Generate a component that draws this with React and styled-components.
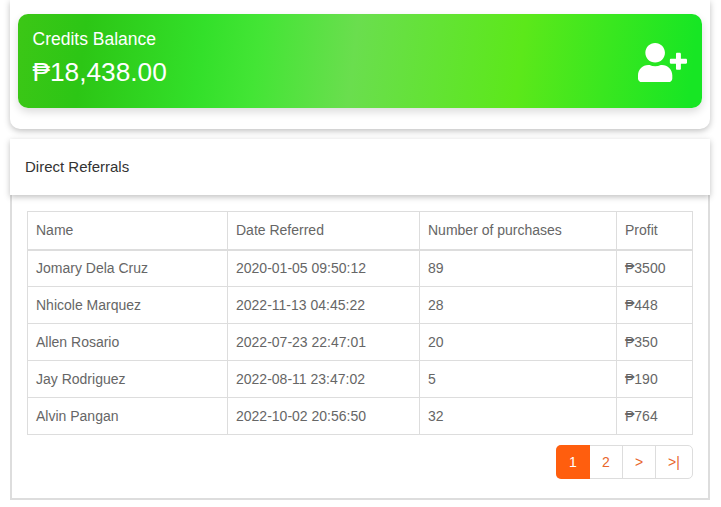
import React from 'react'
import styled, { createGlobalStyle } from 'styled-components'
import { FaUserPlus } from 'react-icons/fa'

const GlobalStyle = createGlobalStyle`
  html, body { margin: 0; padding: 0; background: #fff; }
  body { font-family: "Liberation Sans", Arial, sans-serif; }
  * { box-sizing: border-box; }
`

const Page = styled.div`
  width: 721px;
  height: 507px;
  padding: 0 11px 0 10px;
  overflow: hidden;
`

const BalanceCard = styled.section`
  height: 129px;
  padding: 14px 8px 0;
  background: #fff;
  border-radius: 0 0 10px 10px;
  box-shadow: 0 2px 6px rgba(0, 0, 0, 0.25);
`

const Banner = styled.div`
  height: 94px;
  padding: 0 15px 0 14.5px;
  display: flex;
  align-items: center;
  justify-content: space-between;
  color: #fff;
  border-radius: 10px;
  background: linear-gradient(97deg, #3cc716 0%, #2cc615 10%, #33e02a 27%, #43e535 35%, #6ade4e 49%, #5ce81a 73%, #17e624 98%);
  box-shadow: 0 4px 8px rgba(0, 0, 0, 0.14);
`

const BannerText = styled.div`
  display: flex;
  flex-direction: column;
  gap: 6px;
  margin-bottom: 6px;
`

const BannerLabel = styled.div`
  font-size: 17.5px;
  line-height: 21px;
`

const BannerAmount = styled.div`
  font-size: 26.25px;
  line-height: 32px;
`

const UserIcon = styled(FaUserPlus)`
  margin-top: 2px;
`

const HeaderBar = styled.div`
  height: 56px;
  margin-top: 10px;
  padding: 0 15px 2px;
  display: flex;
  align-items: center;
  position: relative;
  font-size: 15px;
  color: #333;
  background: #fff;
  box-shadow: 0 2px 6px rgba(0, 0, 0, 0.25);
`

const Body = styled.div`
  height: 305px;
  padding: 16px 15px 0;
  background: #fff;
  border: 2px solid #ddd;
  border-top: 0;
  display: flex;
  flex-direction: column;
  align-items: flex-end;
`

const Table = styled.table`
  width: 665px;
  border-collapse: collapse;
  table-layout: fixed;
  font-size: 14px;
  color: #666;
`

const Th = styled.th`
  height: 38px;
  padding: 0 8px;
  font-weight: 400;
  text-align: left;
  border: 1px solid #ddd;
  border-bottom-width: 2px;
  width: ${p => p.$w}px;
`

const Td = styled.td`
  height: 37px;
  padding: 0 8px;
  border: 1px solid #ddd;
`

const Pager = styled.div`
  margin-top: 10px;
  display: flex;
  height: 34px;
  border: 1px solid #ddd;
  border-radius: 5px;
`

const PageBtn = styled.div`
  width: ${p => p.$w}px;
  display: flex;
  align-items: center;
  justify-content: center;
  font-size: 14px;
  color: ${p => (p.$active ? '#fff' : '#e8662c')};
  background: ${p => (p.$active ? '#ff5e0e' : 'transparent')};
  border-left: ${p => (p.$first || p.$plain ? '0' : '1px solid #ddd')};
  margin: ${p => (p.$active ? '-1px 0 -1px -1px' : '0')};
  border-radius: ${p => (p.$active ? '5px 0 0 5px' : '0')};
`

const rows = [
  ['Jomary Dela Cruz', '2020-01-05 09:50:12', '89', '₱3500'],
  ['Nhicole Marquez', '2022-11-13 04:45:22', '28', '₱448'],
  ['Allen Rosario', '2022-07-23 22:47:01', '20', '₱350'],
  ['Jay Rodriguez', '2022-08-11 23:47:02', '5', '₱190'],
  ['Alvin Pangan', '2022-10-02 20:56:50', '32', '₱764'],
]

export default function App() {
  return (
    <Page>
      <GlobalStyle />
      <BalanceCard>
        <Banner>
          <BannerText>
            <BannerLabel>Credits Balance</BannerLabel>
            <BannerAmount>₱18,438.00</BannerAmount>
          </BannerText>
          <UserIcon size={49} />
        </Banner>
      </BalanceCard>
      <HeaderBar>Direct Referrals</HeaderBar>
      <Body>
        <Table>
          <thead>
            <tr>
              <Th $w={200}>Name</Th>
              <Th $w={192}>Date Referred</Th>
              <Th $w={197}>Number of purchases</Th>
              <Th $w={76}>Profit</Th>
            </tr>
          </thead>
          <tbody>
            {rows.map(r => (
              <tr key={r[0]}>
                {r.map(c => <Td key={c}>{c}</Td>)}
              </tr>
            ))}
          </tbody>
        </Table>
        <Pager>
          <PageBtn $w={34} $active $first>1</PageBtn>
          <PageBtn $w={32} $plain>2</PageBtn>
          <PageBtn $w={33}>&gt;</PageBtn>
          <PageBtn $w={37}>&gt;|</PageBtn>
        </Pager>
      </Body>
    </Page>
  )
}
